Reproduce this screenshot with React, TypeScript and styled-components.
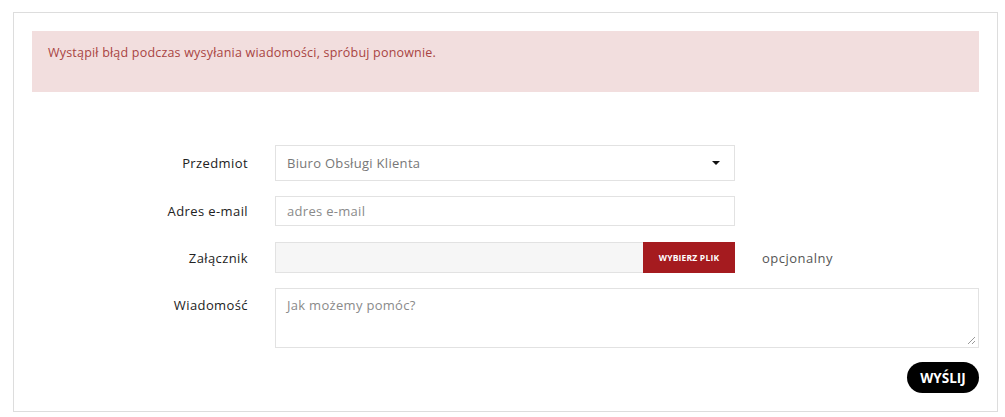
import React from "react";
import styled, { createGlobalStyle } from "styled-components";

const GlobalStyle = createGlobalStyle`
  body {
    margin: 0;
    background: #fff;
    font-family: "Open Sans", "Liberation Sans", sans-serif;
  }
`;

const Page = styled.div`
  padding: 12px 7px 0 13px;
`;

const Card = styled.div`
  border: 1px solid #dddddd;
  padding: 18px 18px 18px;
  display: flex;
  flex-direction: column;
`;

const Alert = styled.div`
  background-color: #f2dede;
  color: #a94442;
  font-size: 12.5px;
  letter-spacing: 0.2px;
  height: 61px;
  box-sizing: border-box;
  padding: 13px 16px;
`;

const Form = styled.form`
  margin-top: 53px;
  display: flex;
  flex-direction: column;
  gap: 15px;
`;

const Row = styled.div<{ $top?: boolean; $shift?: number }>`
  display: flex;
  align-items: ${({ $top }) => ($top ? "flex-start" : "center")};
  gap: 27px;
  margin-top: ${({ $shift }) => $shift ?? 0}px;
`;

const Label = styled.label<{ $top?: boolean }>`
  width: 216px;
  flex-shrink: 0;
  text-align: right;
  font-size: 13px;
  letter-spacing: 0.4px;
  color: #222;
  padding-top: ${({ $top }) => ($top ? "8px" : "0")};
`;

const Field = styled.div<{ $h: number }>`
  box-sizing: border-box;
  width: 460px;
  height: ${({ $h }) => $h}px;
  border: 1px solid #e2e2e2;
  background: #fff;
  display: flex;
  align-items: center;
  padding-left: 11px;
  font-size: 13px;
  letter-spacing: 0.3px;
  color: #777;
`;

const SelectValue = styled.span`
  flex: 1;
`;

const Caret = styled.span`
  width: 0;
  height: 0;
  border-left: 4px solid transparent;
  border-right: 4px solid transparent;
  border-top: 4px solid #111;
  margin-right: 14px;
`;

const Placeholder = styled.span`
  color: #8a8a8a;
`;

const FileBox = styled.div`
  display: flex;
  width: 460px;
  height: 31px;
`;

const FileName = styled.div`
  flex: 1;
  background: #f6f6f6;
  border: 1px solid #e2e2e2;
  border-right: none;
`;

const FileButton = styled.button`
  width: 92px;
  border: none;
  background: #a51b1f;
  color: #fff;
  font-family: "Open Sans", "Liberation Sans", sans-serif;
  font-weight: 700;
  font-size: 8.5px;
  letter-spacing: 0.2px;
  padding: 0;
`;

const Hint = styled.span`
  font-size: 13px;
  letter-spacing: 0.5px;
  color: #555;
`;

const TextArea = styled.div`
  position: relative;
  box-sizing: border-box;
  width: 704px;
  height: 60px;
  border: 1px solid #e2e2e2;
  padding: 7px 11px;
  font-size: 13px;
  letter-spacing: 0.3px;
  color: #8a8a8a;
`;

const Grip = styled.svg`
  position: absolute;
  right: 2px;
  bottom: 2px;
`;

const Actions = styled.div`
  display: flex;
  justify-content: flex-end;
  margin-top: -1px;
`;

const Submit = styled.button`
  background: #000;
  color: #fff;
  border: none;
  border-radius: 16px;
  height: 31px;
  width: 72px;
  font-family: "Open Sans", "Liberation Sans", sans-serif;
  font-weight: 700;
  font-size: 13.5px;
  padding: 0;
`;

export default function App() {
  return (
    <Page>
      <GlobalStyle />
      <Card>
        <Alert>Wystąpił błąd podczas wysyłania wiadomości, spróbuj ponownie.</Alert>
        <Form>
          <Row>
            <Label>Przedmiot</Label>
            <Field $h={36}>
              <SelectValue>Biuro Obsługi Klienta</SelectValue>
              <Caret />
            </Field>
          </Row>
          <Row>
            <Label>Adres e-mail</Label>
            <Field $h={30}>
              <Placeholder>adres e-mail</Placeholder>
            </Field>
          </Row>
          <Row $shift={1}>
            <Label>Załącznik</Label>
            <FileBox>
              <FileName />
              <FileButton type="button">WYBIERZ PLIK</FileButton>
            </FileBox>
            <Hint>opcjonalny</Hint>
          </Row>
          <Row $top>
            <Label $top>Wiadomość</Label>
            <TextArea>
              Jak możemy pomóc?
              <Grip width="9" height="9" viewBox="0 0 9 9">
                <path d="M8 1 L1 8 M8 5 L5 8" stroke="#999" strokeWidth="1" />
              </Grip>
            </TextArea>
          </Row>
          <Actions>
            <Submit type="button">WYŚLIJ</Submit>
          </Actions>
        </Form>
      </Card>
    </Page>
  );
}
